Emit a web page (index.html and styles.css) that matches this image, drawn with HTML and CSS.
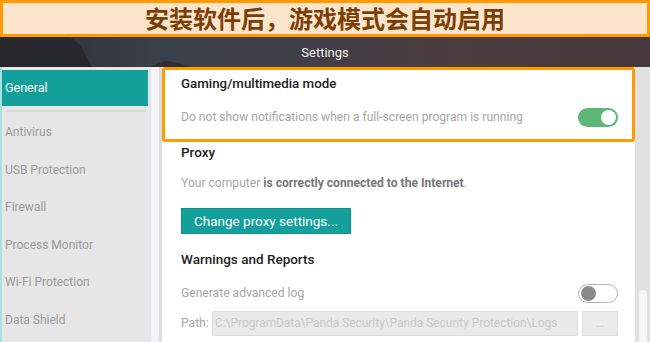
FILE: index.html
```html
<!DOCTYPE html>
<html>
<head>
<meta charset="utf-8">
<link rel="stylesheet" href="styles.css">
</head>
<body>
<div class="banner">安装软件后，游戏模式会自动启用</div>
<div class="header">
  <svg class="hills" width="650" height="30" viewBox="0 0 650 30" preserveAspectRatio="none">
    <path d="M0 0 L70 0 L80 8 L92 30 L0 30 Z" fill="#26262b" opacity="0.8"/>
    <path d="M150 30 L165 24 L178 26 L190 30 Z" fill="#2a2626" opacity="0.7"/>
  </svg>
  <span class="header-title">Settings</span>
</div>
<div class="main">
  <nav class="sidebar">
    <div class="nav-item active">General</div>
    <div class="nav-sep"></div>
    <div class="nav-item">Antivirus</div>
    <div class="nav-item">USB Protection</div>
    <div class="nav-item">Firewall</div>
    <div class="nav-item">Process Monitor</div>
    <div class="nav-item">Wi-Fi Protection</div>
    <div class="nav-item">Data Shield</div>
  </nav>
  <div class="side-scroll"></div>
  <div class="content">
    <section class="highlight">
      <h2 class="title">Gaming/multimedia mode</h2>
      <div class="row">
        <span class="desc">Do not show notifications when a full-screen program is running</span>
        <span class="toggle on"><span class="knob"></span></span>
      </div>
    </section>
    <section class="block">
      <h2 class="title">Proxy</h2>
      <p class="desc conn">Your computer <b>is correctly connected to the Internet</b>.</p>
      <button class="btn">Change proxy settings...</button>
    </section>
    <section class="block warn">
      <h2 class="title">Warnings and Reports</h2>
      <div class="row">
        <span class="desc">Generate advanced log</span>
        <span class="toggle off"><span class="knob"></span></span>
      </div>
      <div class="path-row">
        <span class="desc">Path:</span>
        <span class="path-input">C:\ProgramData\Panda Security\Panda Security Protection\Logs</span>
        <span class="path-btn">...</span>
      </div>
    </section>
  </div>
  <div class="main-scroll"><div class="thumb"></div></div>
</div>
</body>
</html>
```

FILE: styles.css
```css
* { box-sizing: border-box; }
html, body { margin: 0; padding: 0; }
body {
  width: 650px;
  height: 342px;
  overflow: hidden;
  font-family: Roboto, "Liberation Sans", sans-serif;
  background: #fff;
}
.banner {
  height: 37px;
  border: 3px solid #ff9a00;
  background: #fde5cb;
  color: #7a3e06;
  font-family: "Noto Sans CJK SC", sans-serif;
  font-weight: 700;
  font-size: 24px;
  line-height: 30px;
  text-align: center;
  white-space: nowrap;
}
.header {
  position: relative;
  height: 30px;
  background: linear-gradient(90deg, #2c2d33 0%, #3a4049 25%, #3f3f48 45%, #4c3d3e 70%, #45373b 100%);
  display: flex;
  align-items: center;
  justify-content: center;
}
.hills { position: absolute; left: 0; top: 0; }
.header-title {
  position: relative;
  color: #f2f2f2;
  font-size: 13px;
}
.main {
  display: flex;
  height: 275px;
}
.sidebar {
  width: 150px;
  background: #e6e6e6;
  border-left: 2px solid #a6e3e0;
  padding-top: 3px;
}
.nav-item {
  height: 37.5px;
  line-height: 37.5px;
  padding-left: 3px;
  font-size: 12px;
  color: #9a9a9a;
}
.nav-item.active {
  height: 36px;
  line-height: 36px;
  margin-right: 2px;
  background: #13a09b;
  color: #fff;
  font-size: 12.5px;
}
.nav-sep {
  height: 2px;
  margin: 4px 4px 2px 4px;
  background: #d6d6d6;
}
.nav-sep + .nav-item { margin-top: 2px; }
.side-scroll {
  width: 12px;
  background: #f3f3f5;
  border-left: 1px solid #e4e4e6;
  border-right: 3px solid #dcdcdc;
}
.content {
  flex: 1;
}
.highlight {
  height: 75px;
  border: 3px solid #ff9a00;
  border-radius: 3px;
  padding: 4px 14px 0 16px;
}
.title {
  margin: 0;
  font-size: 13.3px;
  font-weight: 500;
  color: #222;
  line-height: 20px;
}
.block .title { font-size: 13.5px; }
.row {
  display: flex;
  align-items: center;
  justify-content: space-between;
  height: 22px;
  margin-top: 12px;
}
.desc {
  font-size: 12.1px;
  color: #a6a6a6;
}
.toggle {
  position: relative;
  width: 40px;
  height: 19px;
  border-radius: 10px;
  flex: none;
}
.toggle.on { background: #5cb874; }
.toggle.off { background: #fff; border: 1px solid #b5b5b5; }
.knob {
  position: absolute;
  top: 2px;
  width: 15px;
  height: 15px;
  border-radius: 50%;
}
.toggle.on .knob { right: 2px; background: #fff; }
.toggle.off .knob { left: 2px; top: 1px; background: #8a8a8a; }
.block {
  padding: 0 17px 0 19px;
}
.conn {
  margin: 11px 0 0 0;
  line-height: 20px;
}
.conn b { color: #777; font-weight: 700; }
.btn {
  margin-top: 15px;
  width: 170px;
  height: 26px;
  border: 1px solid #0f938e;
  background: #13a09b;
  color: #fff;
  font-family: Roboto, "Liberation Sans", sans-serif;
  font-size: 13.5px;
  padding: 0;
  display: block;
}
.warn { padding-top: 15px; }
.warn .row { margin-top: 13px; }
.path-row {
  display: flex;
  align-items: center;
  margin-top: 6px;
  height: 26px;
}
.path-row .desc { width: 31px; }
.path-input {
  width: 366px;
  height: 25px;
  background: #e9e9e9;
  border: 1px solid #dcdcdc;
  border-radius: 2px;
  color: #c9c9c9;
  font-size: 11.9px;
  line-height: 23px;
  padding-left: 2px;
  white-space: nowrap;
  overflow: hidden;
}
.path-btn {
  margin-left: 4px;
  width: 36px;
  height: 25px;
  background: #ebebeb;
  border: 1px solid #dcdcdc;
  color: #c4c4c4;
  font-size: 10px;
  text-align: center;
  line-height: 23px;
}
.main-scroll {
  width: 15px;
  background: #e1e1e1;
  padding: 223px 3px 0 4px;
}
.thumb {
  height: 60px;
  background: #f6f6f6;
  border-radius: 4px;
}
```
